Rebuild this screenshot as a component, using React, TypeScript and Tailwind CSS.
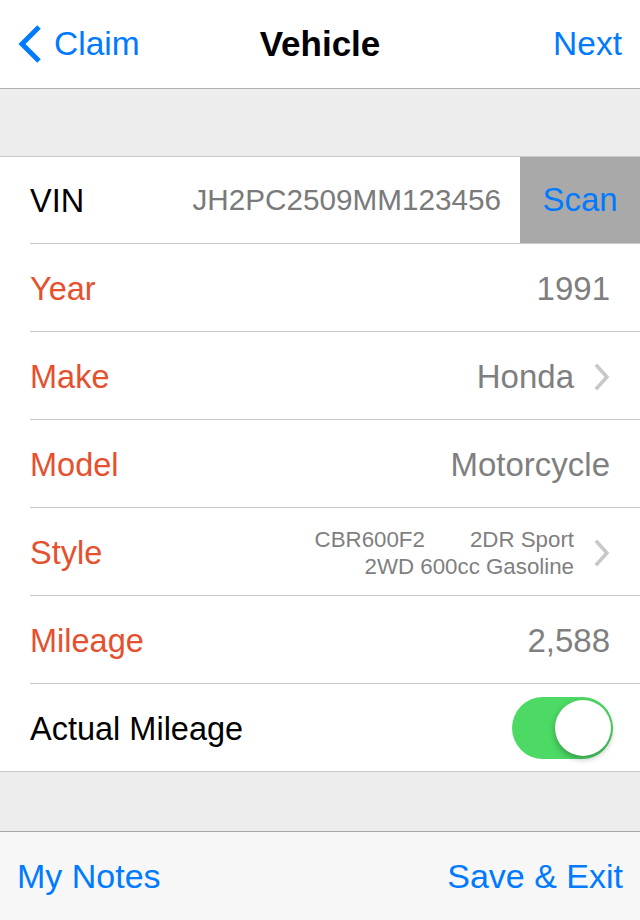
import React from "react";

const Chevron = () => (
  <svg width="16" height="26" viewBox="0 0 16 26" className="ml-[20px] shrink-0">
    <path d="M3 2 L13 13 L3 24" fill="none" stroke="#c7c7cc" strokeWidth="3.5" strokeLinecap="square" />
  </svg>
);

function Row({ label, red = true, children, last = false }: { label: string; red?: boolean; children?: React.ReactNode; last?: boolean }) {
  return (
    <div className={`flex h-[88px] ${last ? "border-b border-[#c8c7cc]" : ""}`}>
      <div className={`ml-[30px] flex flex-1 items-center pr-[30px] pt-[3px] ${last ? "" : "border-b border-[#c8c7cc]"}`}>
        <span className={`text-[32.5px] ${red ? "text-[#e5502e]" : "text-black"}`}>{label}</span>
        <div className="flex flex-1 items-center justify-end">{children}</div>
      </div>
    </div>
  );
}

export default function App() {
  return (
    <div className="flex h-[920px] w-[640px] flex-col bg-[#ededed] font-['Liberation_Sans',Arial,sans-serif]">
      <div className="grid h-[89px] grid-cols-3 items-center border-b border-[#b2b2b2] bg-white">
        <div className="flex items-center pl-[17px] text-[#007aff]">
          <svg width="26" height="40" viewBox="0 0 26 40" className="shrink-0">
            <path d="M22 3 L5 20 L22 37" fill="none" stroke="#007aff" strokeWidth="5" />
          </svg>
          <span className="ml-[11px] text-[33.5px]">Claim</span>
        </div>
        <div className="text-center text-[35px] font-bold text-black">Vehicle</div>
        <div className="pr-[18px] text-right text-[33.5px] text-[#007aff]">Next</div>
      </div>
      <div className="h-[67px]" />
      <div className="border-t border-[#c8c7cc] bg-white">
        <div className="flex h-[87px]">
          <div className="ml-[30px] flex flex-1 items-center border-b border-[#c8c7cc]">
            <span className="pt-[2px] text-[32.5px] text-black">VIN</span>
            <span className="flex-1 pr-[19px] text-right text-[29.7px] text-[#7a7a7a]">JH2PC2509MM123456</span>
            <div className="flex h-full w-[120px] items-center justify-center bg-[#a9a9a9] text-[33px] text-[#007aff]">Scan</div>
          </div>
        </div>
        <Row label="Year">
          <span className="text-[33px] text-[#7f7f7f]">1991</span>
        </Row>
        <Row label="Make">
          <span className="text-[33px] text-[#7f7f7f]">Honda</span>
          <Chevron />
        </Row>
        <Row label="Model">
          <span className="text-[33px] text-[#7f7f7f]">Motorcycle</span>
        </Row>
        <Row label="Style">
          <div className="flex flex-col items-end text-[22.3px] leading-[27px] text-[#7f7f7f]">
            <div className="flex gap-[45px]">
              <span>CBR600F2</span>
              <span>2DR Sport</span>
            </div>
            <span>2WD 600cc Gasoline</span>
          </div>
          <Chevron />
        </Row>
        <Row label="Mileage">
          <span className="text-[33px] text-[#7f7f7f]">2,588</span>
        </Row>
        <Row label="Actual Mileage" red={false} last>
          <div className="relative -mr-[3px] -mt-[3px] h-[62px] w-[101px] rounded-full bg-[#4cd964]">
            <div className="absolute right-[2px] top-[3px] h-[56px] w-[56px] rounded-full bg-white shadow-[0_3px_6px_rgba(0,0,0,0.3)]" />
          </div>
        </Row>
      </div>
      <div className="h-[59px]" />
      <div className="flex flex-1 items-center justify-between border-t border-[#a7a7aa] bg-[#f7f7f7] px-[17px] text-[34px] text-[#007aff]">
        <span>My Notes</span>
        <span>Save &amp; Exit</span>
      </div>
    </div>
  );
}
